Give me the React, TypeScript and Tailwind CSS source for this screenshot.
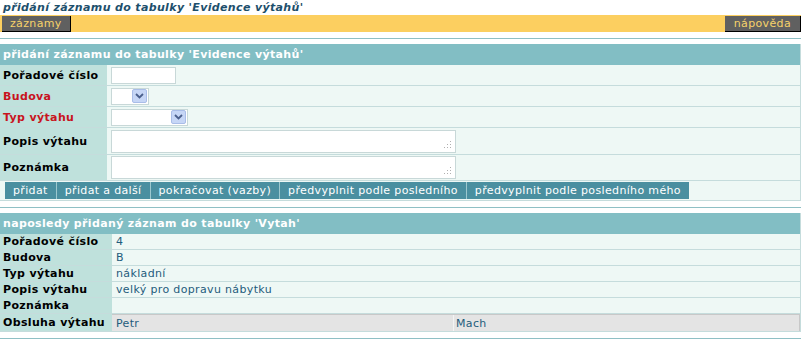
import { ReactNode } from "react";

const font = { fontFamily: '"DejaVu Sans", Verdana, sans-serif' };

function Select({ width }: { width: string }) {
  return (
    <div className={`flex h-[17px] ${width} items-center justify-end border border-[#c8d8d8] bg-white`}>
      <div className="mr-[1px] flex h-[14px] w-[15px] items-center justify-center rounded-[2px] bg-[#c6d6f6] border border-[#a9bde8]">
        <svg width="9" height="6" viewBox="0 0 9 6">
          <path d="M1 1 L4.5 4.5 L8 1" fill="none" stroke="#4a5f8c" strokeWidth="1.8" />
        </svg>
      </div>
    </div>
  );
}

function TextArea() {
  return (
    <div className="relative h-[23px] w-[345px] border border-[#c8d8d8] bg-white">
      <svg className="absolute bottom-[3px] right-[3px]" width="8" height="8" viewBox="0 0 8 8">
        <rect x="6" y="0" width="1" height="1" fill="#b0b0b0" />
        <rect x="3" y="3" width="1" height="1" fill="#b0b0b0" />
        <rect x="6" y="3" width="1" height="1" fill="#b0b0b0" />
        <rect x="0" y="6" width="1" height="1" fill="#b0b0b0" />
        <rect x="3" y="6" width="1" height="1" fill="#b0b0b0" />
        <rect x="6" y="6" width="1" height="1" fill="#b0b0b0" />
      </svg>
    </div>
  );
}

function FormRow({ label, red, height, children }: { label: string; red?: boolean; height: string; children: ReactNode }) {
  return (
    <div className={`flex ${height} border-b border-[#c5dcdc]`}>
      <div className={`flex w-[107px] shrink-0 items-center bg-[#bfe1dc] pl-[3px] font-bold ${red ? "text-[#c8141e]" : "text-black"}`}>
        {label}
      </div>
      <div className="flex flex-1 items-center bg-[#eef8f5] pl-[4px]">{children}</div>
    </div>
  );
}

function InfoRow({ label, children }: { label: string; children?: ReactNode }) {
  return (
    <div className="flex h-[16px] border-b border-[#c5dcdc]">
      <div className="flex w-[112px] shrink-0 items-center bg-[#bfe1dc] pl-[3px] font-bold text-black">{label}</div>
      <div className="flex flex-1 items-center bg-[#eef8f5] pl-[4px] text-[#1f5c7c]">{children}</div>
    </div>
  );
}

const buttons = [
  "přidat",
  "přidat a další",
  "pokračovat (vazby)",
  "předvyplnit podle posledního",
  "předvyplnit podle posledního mého",
];

export default function App() {
  return (
    <div className="h-[345px] w-[803px] bg-white text-[11px] leading-[13px] tracking-[0.35px]" style={font}>
      <h1 className="h-[15px] pl-[3px] pt-[1px] text-[11px] font-bold italic text-[#1d4f6c]">
        přidání záznamu do tabulky 'Evidence výtahů'
      </h1>
      <div className="flex h-[17px] w-[801px] items-center justify-between bg-[#fccf60]">
        <button className="ml-[2px] h-[16px] border-r border-b border-black bg-[#606060] px-[8px] text-[11px] tracking-[0.35px] text-[#f6d26a]">
          záznamy
        </button>
        <button className="h-[16px] border-r border-b border-black bg-[#606060] px-[9px] text-[11px] tracking-[0.35px] text-[#f6d26a]">
          nápověda
        </button>
      </div>
      <div className="mt-[6px] h-[1px] w-[801px] bg-[#8fc0c5]" />

      <section className="mt-[5px] w-[801px] border-r border-[#c5dcdc]">
        <div className="flex h-[21px] items-center bg-[#82bec4] pl-[3px] font-bold text-white">
          přidání záznamu do tabulky 'Evidence výtahů'
        </div>
        <FormRow label="Pořadové číslo" height="h-[21px]">
          <div className="h-[17px] w-[65px] border border-[#c8d8d8] bg-white" />
        </FormRow>
        <FormRow label="Budova" red height="h-[21px]">
          <Select width="w-[38px]" />
        </FormRow>
        <FormRow label="Typ výtahu" red height="h-[21px]">
          <Select width="w-[77px]" />
        </FormRow>
        <FormRow label="Popis výtahu" height="h-[27px]">
          <TextArea />
        </FormRow>
        <FormRow label="Poznámka" height="h-[26px]">
          <TextArea />
        </FormRow>
        <div className="flex h-[20px] items-center border-b border-[#c5dcdc] bg-[#eef8f5] pl-[5px]">
          <div className="flex h-[17px] bg-[#4a8fa0]">
            {buttons.map((b, i) => (
              <button
                key={b}
                className={`h-[17px] px-[8px] text-[11px] tracking-[0.35px] text-white ${i > 0 ? "border-l border-[#9cc8cf]" : ""}`}
              >
                {b}
              </button>
            ))}
          </div>
        </div>
      </section>
      <div className="mt-[6px] h-[1px] w-[801px] bg-[#8fc0c5]" />

      <section className="mt-[5px] w-[801px] border-r border-[#c5dcdc]">
        <div className="flex h-[21px] items-center bg-[#82bec4] pl-[3px] font-bold text-white">
          naposledy přidaný záznam do tabulky 'Vytah'
        </div>
        <InfoRow label="Pořadové číslo">4</InfoRow>
        <InfoRow label="Budova">B</InfoRow>
        <InfoRow label="Typ výtahu">nákladní</InfoRow>
        <InfoRow label="Popis výtahu">velký pro dopravu nábytku</InfoRow>
        <InfoRow label="Poznámka" />
        <div className="flex h-[18px] border-b border-[#c5dcdc]">
          <div className="flex w-[112px] shrink-0 items-center bg-[#bfe1dc] pl-[3px] font-bold text-black">
            Obsluha výtahu
          </div>
          <div className="flex flex-1 border-t border-[#c8c8c8] bg-[#e4e4e4] text-[#1f5c7c]">
            <div className="flex w-[342px] items-center border-r border-[#f4f4f4] pl-[4px]">Petr</div>
            <div className="flex flex-1 items-center border-r border-[#c8c8c8] pl-[2px]">Mach</div>
          </div>
        </div>
      </section>
      <div className="mt-[6px] h-[1px] w-[801px] bg-[#8fc0c5]" />
    </div>
  );
}
